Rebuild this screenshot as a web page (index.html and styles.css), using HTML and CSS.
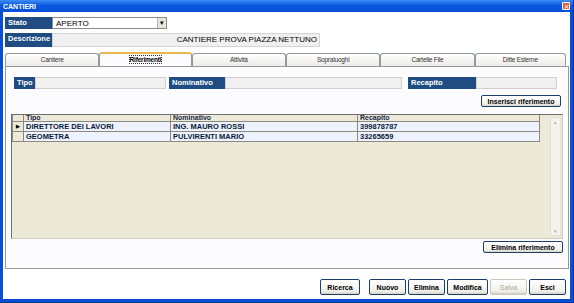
FILE: index.html
```html
<!DOCTYPE html>
<html lang="it">

<head>
  <meta charset="UTF-8" />
  <title>Cantieri</title>
  <link rel="stylesheet" href="styles.css">
</head>

<body>
  <div class="window">
    <div class="titlebar">
      <span class="title">CANTIERI</span>
      <span class="close">&#x2715;</span>
    </div>

    <div class="client">
      <div class="head-row">
        <div class="lbl">Stato</div>
        <div class="combo">
          <span>APERTO</span>
          <span class="drop">&#9662;</span>
        </div>
      </div>
      <div class="head-row desc-row">
        <div class="lbl">Descrizione</div>
        <div class="desc">CANTIERE PROVA PIAZZA NETTUNO</div>
      </div>

      <div class="tabs">
        <div class="tab">Cantiere</div>
        <div class="tab active"><span>Riferimenti</span></div>
        <div class="tab">Attività</div>
        <div class="tab">Sopraluoghi</div>
        <div class="tab">Cartelle File</div>
        <div class="tab">Ditte Esterne</div>
      </div>

      <div class="panel">
        <div class="fields">
          <div class="lbl f-tipo">Tipo</div>
          <div class="inp w-tipo"></div>
          <div class="lbl f-nom">Nominativo</div>
          <div class="inp w-nom"></div>
          <div class="lbl f-rec">Recapito</div>
          <div class="inp w-rec"></div>
        </div>

        <div class="btn-row">
          <button class="btn wide">Inserisci riferimento</button>
        </div>

        <div class="grid">
          <div class="grid-body">
            <table>
              <tr class="hdr">
                <td class="sel"></td>
                <td class="c-tipo">Tipo</td>
                <td class="c-nom">Nominativo</td>
                <td class="c-rec">Recapito</td>
              </tr>
              <tr>
                <td class="sel">&#9654;</td>
                <td>DIRETTORE DEI LAVORI</td>
                <td>ING. MAURO ROSSI</td>
                <td>399878787</td>
              </tr>
              <tr>
                <td class="sel"></td>
                <td>GEOMETRA</td>
                <td>PULVIRENTI MARIO</td>
                <td>33265659</td>
              </tr>
            </table>
          </div>
          <div class="scroll">
            <span class="arrow">&#9652;</span>
            <span class="arrow">&#9662;</span>
          </div>
        </div>

        <div class="btn-row low">
          <button class="btn wide">Elimina riferimento</button>
        </div>
      </div>

      <div class="actions">
        <button class="btn act ricerca">Ricerca</button>
        <button class="btn act">Nuovo</button>
        <button class="btn act">Elimina</button>
        <button class="btn act">Modifica</button>
        <button class="btn act" disabled>Salva</button>
        <button class="btn act">Esci</button>
      </div>
    </div>
  </div>
</body>

</html>
```

FILE: styles.css
```css
body {
  margin: 0;
  width: 574px;
  height: 303px;
  overflow: hidden;
  font-family: "Liberation Sans", Arial, sans-serif;
  background: #fff;
}

.window {
  width: 574px;
  height: 303px;
  box-sizing: border-box;
  display: flex;
  flex-direction: column;
  background: #0a4fd2;
  border-right: 1px solid #0037a8;
  border-bottom: 1px solid #00309a;
}

.titlebar {
  height: 12px;
  display: flex;
  align-items: center;
  justify-content: space-between;
  padding: 0 3px 0 3px;
  background: linear-gradient(#3d8cf5, #0a5ae0 45%, #0650d4);
}

.title {
  color: #fff;
  font-size: 7px;
  font-weight: bold;
}

.close {
  width: 8px;
  height: 8px;
  background: #e2603c;
  border: 1px solid #fff;
  border-radius: 1px;
  color: #fff;
  font-size: 6px;
  line-height: 8px;
  text-align: center;
  box-sizing: border-box;
}

.client {
  flex: 1;
  margin: 0 3px 3px 3px;
  background: #fff;
  padding: 5px 4px 0 2px;
  display: flex;
  flex-direction: column;
}

.head-row {
  display: flex;
  height: 12px;
}

.desc-row {
  margin-top: 4px;
  height: 14px;
}

.lbl {
  background: #1f4d82;
  color: #fff;
  font-size: 7.5px;
  font-weight: bold;
  padding: 1px 0 0 3px;
  box-sizing: border-box;
}

.head-row .lbl {
  width: 47px;
}

.combo {
  width: 115px;
  border: 1px solid #8c8c8c;
  box-sizing: border-box;
  display: flex;
  justify-content: space-between;
  align-items: center;
  font-size: 8px;
  padding-left: 3px;
}

.drop {
  width: 8px;
  height: 10px;
  background: #e8e6da;
  border-left: 1px solid #b8b6aa;
  font-size: 7px;
  line-height: 10px;
  text-align: center;
}

.desc {
  width: 268px;
  background: #f0f0f0;
  border: 1px solid #d4d4d4;
  box-sizing: border-box;
  text-align: right;
  font-size: 8px;
  line-height: 12px;
  padding-right: 2px;
}

.tabs {
  display: flex;
  margin-top: 5px;
  height: 14px;
  align-items: flex-end;
}

.tab {
  width: 95px;
  height: 13px;
  box-sizing: border-box;
  border: 1px solid #919b9c;
  border-bottom: none;
  border-radius: 3px 3px 0 0;
  background: linear-gradient(#ffffff, #ecebe6);
  font-size: 6.5px;
  color: #333;
  text-align: center;
  line-height: 12px;
  letter-spacing: -0.2px;
}

.tab.active {
  height: 14px;
  width: 93px;
  background: #fcfcfe;
  border-top: 2px solid #e8b64a;
  font-weight: bold;
  color: #000;
}

.tab.active span {
  outline: 1px dotted #333;
}

.tab:last-child {
  width: 92px;
}

.panel {
  width: 564px;
  height: 203px;
  box-sizing: border-box;
  border: 1px solid #919b9c;
  background: #fcfcfe;
  padding: 10px 5px 0 5px;
}

.fields {
  display: flex;
  height: 12px;
  padding-left: 3px;
}

.inp {
  background: #f0f0f0;
  border: 1px solid #d0d0d0;
  box-sizing: border-box;
}

.f-tipo { width: 21px; }
.w-tipo { width: 131px; }
.f-nom { width: 56px; margin-left: 3px; }
.w-nom { width: 177px; }
.f-rec { width: 68px; margin-left: 6px; }
.w-rec { width: 81px; }

.btn-row {
  display: flex;
  justify-content: flex-end;
  margin-top: 6px;
  padding-right: 2px;
}

.btn-row.low {
  margin-top: 2px;
  padding-right: 0;
}

.btn {
  font-family: "Liberation Sans", Arial, sans-serif;
  font-weight: bold;
  font-size: 7px;
  color: #000;
  background: linear-gradient(#ffffff, #f0f0ea 80%, #d6d0c5);
  border: 1px solid #1c3f6e;
  border-radius: 2px;
  padding: 0;
  cursor: pointer;
}

.btn.wide {
  width: 80px;
  height: 12px;
}

.grid {
  margin-top: 7px;
  height: 125px;
  box-sizing: border-box;
  border: 1px solid #6e6e6e;
  border-right-color: #cfcdc3;
  border-bottom-color: #cfcdc3;
  background: #ece9d8;
  display: flex;
}

.grid-body {
  flex: 1;
}

table {
  border-collapse: collapse;
  font-size: 7.5px;
  font-weight: bold;
  color: #0a1a3a;
}

td {
  border: 1px solid #8a8a80;
  padding: 0 0 0 2px;
  height: 9px;
  line-height: 9px;
  background: #edf2fc;
  white-space: nowrap;
}

tr.hdr td {
  background: #ece9d8;
  height: 6px;
  line-height: 6px;
  font-size: 7px;
  overflow: hidden;
  border-top: none;
  color: #1a2a4a;
}

td.sel {
  width: 10px;
  background: #ece9d8;
  font-size: 5px;
  text-align: center;
  padding: 0;
  color: #000;
}

.c-tipo { width: 144px; }
.c-nom { width: 184px; }
.c-rec { width: 179px; }

.scroll {
  width: 9px;
  margin: 2px 1px 2px 0;
  background: #f4f3ee;
  border: 1px solid #e2e0d6;
  display: flex;
  flex-direction: column;
  justify-content: space-between;
}

.arrow {
  height: 8px;
  font-size: 5px;
  line-height: 8px;
  text-align: center;
  color: #a8a698;
}

.actions {
  display: flex;
  justify-content: flex-end;
  margin-top: 10px;
  gap: 2px;
}

.btn.act {
  height: 16px;
  width: 37px;
}

.btn.act.ricerca {
  width: 40px;
  margin-right: 7px;
}

.btn.act:nth-child(4) {
  width: 41px;
}

.btn.act:disabled {
  color: #aca899;
  border-color: #c9c7ba;
  font-weight: normal;
}
```
